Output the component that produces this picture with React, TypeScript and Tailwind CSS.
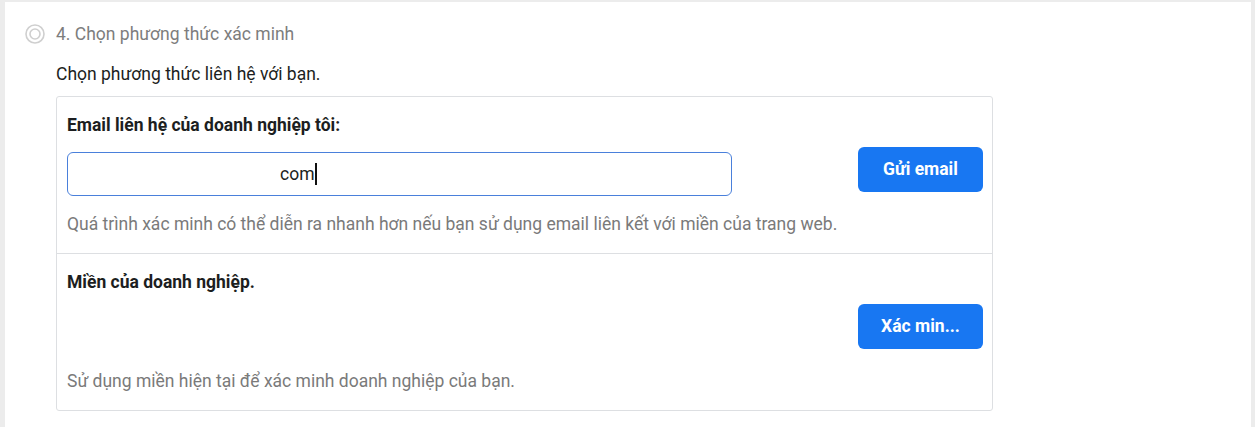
import React from "react"

const font = { fontFamily: "Roboto, 'Noto Sans', Arial, sans-serif" }

function RadioIcon() {
  return (
    <svg width="20" height="20" viewBox="0 0 20 20" aria-hidden="true">
      <circle cx="10" cy="10" r="9" fill="none" stroke="#cfcfcf" strokeWidth="1.6" />
      <circle cx="10" cy="10" r="5" fill="none" stroke="#cfcfcf" strokeWidth="1.6" />
    </svg>
  )
}

function Section({
  title,
  button,
  hint,
  withInput,
}: {
  title: string
  button: string
  hint: string
  withInput?: boolean
}) {
  return (
    <div className="flex pl-[10px] pr-[9px]">
      <div className="flex-1 pt-[18px] pb-[19px]">
        <div className="h-[20px] text-[17.5px] font-bold leading-[20px] text-[#1c1e21]">{title}</div>
        <div className="mt-[17px] h-[44px] w-[665px]">
          {withInput && (
            // the address itself is blanked out in the screenshot, only the tail shows
            <div className="flex h-full items-center rounded-[6px] border border-[#4a80db] pl-[212px] text-[17.5px] text-[#1c1e21]">
              <span>com</span>
              <span className="h-[22px] w-[2px] bg-[#111]" />
            </div>
          )}
        </div>
        <div className="mt-[18px] h-[20px] text-[17.5px] leading-[20px] text-[#7a7a7a]">{hint}</div>
      </div>
      <div className="pt-[50px]">
        <button className="h-[45px] w-[125px] rounded-[6px] bg-[#1877f2] text-[17.5px] font-bold text-white">
          {button}
        </button>
      </div>
    </div>
  )
}

export default function App() {
  return (
    <div style={font} className="h-[427px] overflow-hidden bg-[#ececec] pl-[5px] pr-[4px] pt-[2px]">
      <div className="h-full bg-white pl-[20px] pt-[22px]">
        <div className="flex h-[20px] items-center gap-[11px]">
          <RadioIcon />
          <span className="text-[17.5px] leading-[20px] text-[#7d7d7d]">4. Chọn phương thức xác minh</span>
        </div>
        <div className="ml-[31px]">
          <div className="mt-[20px] h-[20px] text-[17.5px] leading-[20px] text-[#1c1e21]">
            Chọn phương thức liên hệ với bạn.
          </div>
          <div className="mt-[12px] w-[937px] rounded-[3px] border border-[#dddfe2]">
            <Section
              title="Email liên hệ của doanh nghiệp tôi:"
              button="Gửi email"
              hint="Quá trình xác minh có thể diễn ra nhanh hơn nếu bạn sử dụng email liên kết với miền của trang web."
              withInput
            />
            <div className="border-t border-[#dddfe2]" />
            <Section
              title="Miền của doanh nghiệp."
              button="Xác min..."
              hint="Sử dụng miền hiện tại để xác minh doanh nghiệp của bạn."
            />
          </div>
        </div>
      </div>
    </div>
  )
}
